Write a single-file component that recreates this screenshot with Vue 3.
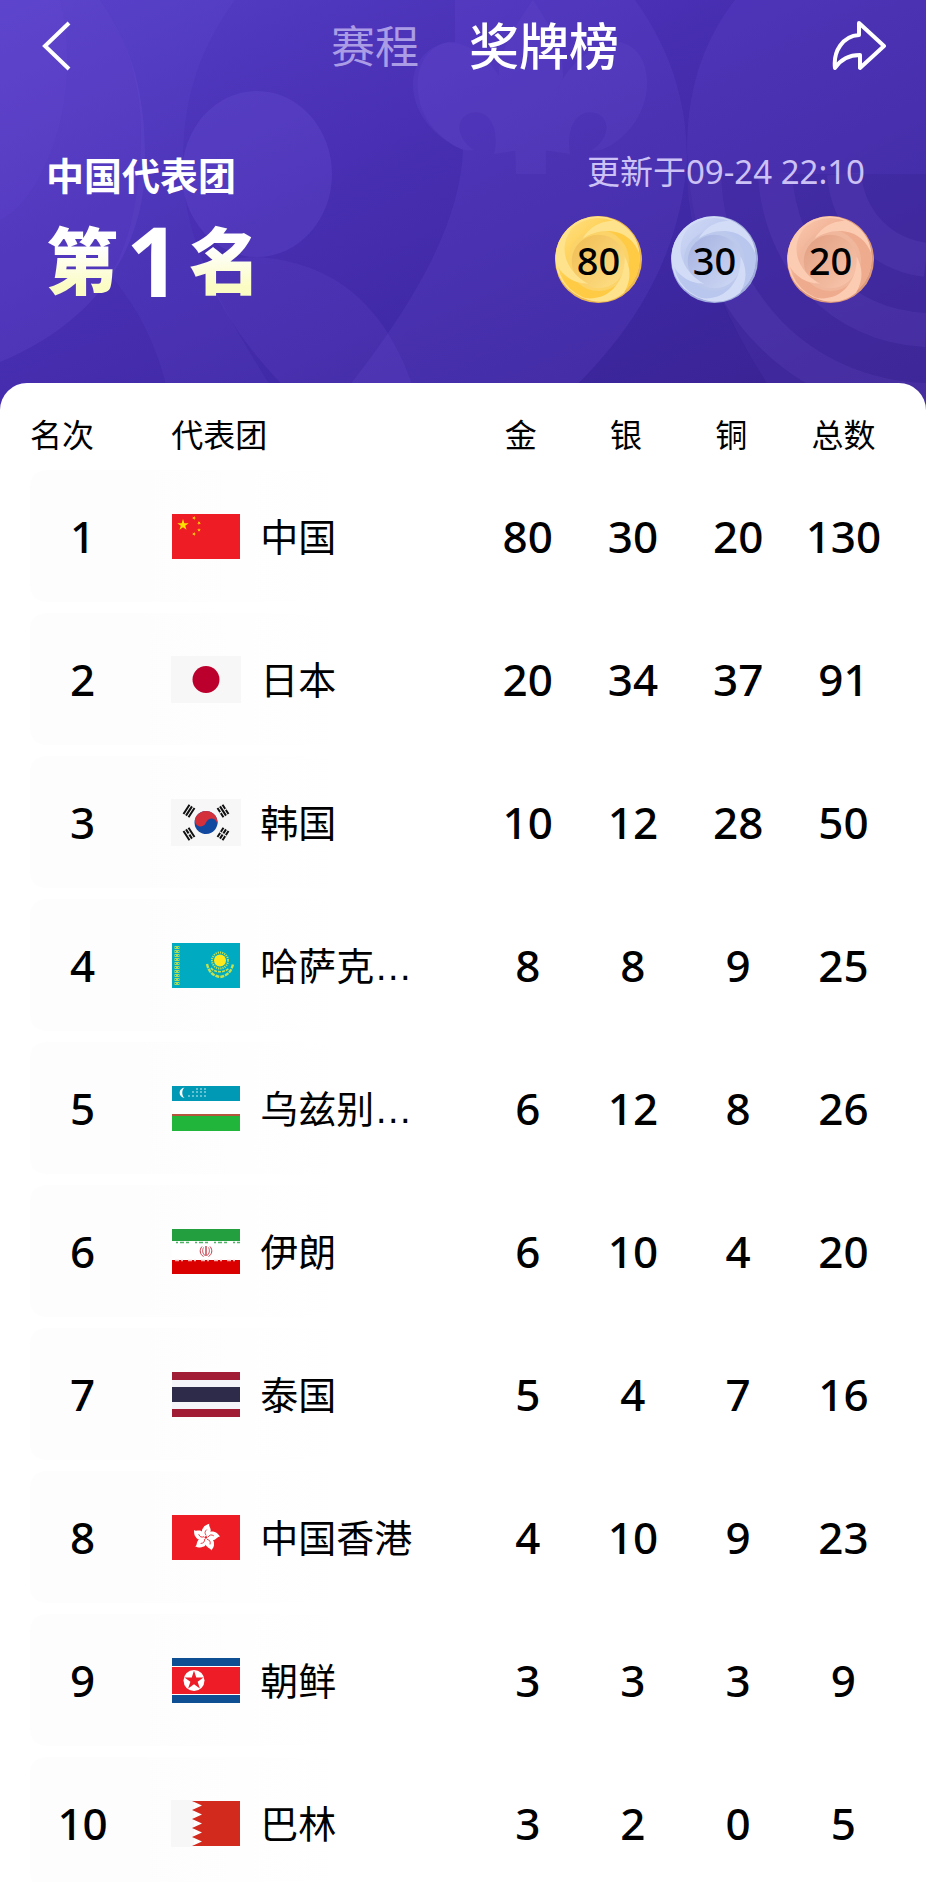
<script setup>
const medals = [
  { id: 'gold', label: '金牌', count: 80, light: '#ffe38c', mid: '#fbd368', deep: '#eeb850', rim: '#ffcb45' },
  { id: 'silver', label: '银牌', count: 30, light: '#d3dcf7', mid: '#bcc8ec', deep: '#a0addd', rim: '#b9c6ee' },
  { id: 'bronze', label: '铜牌', count: 20, light: '#fbcbb2', mid: '#f1b79c', deep: '#de997b', rim: '#eeab8d' },
]

const rows = [
  { rank: 1, code: 'cn', name: '中国', values: [80, 30, 20, 130] },
  { rank: 2, code: 'jp', name: '日本', values: [20, 34, 37, 91] },
  { rank: 3, code: 'kr', name: '韩国', values: [10, 12, 28, 50] },
  { rank: 4, code: 'kz', name: '哈萨克…', values: [8, 8, 9, 25] },
  { rank: 5, code: 'uz', name: '乌兹别…', values: [6, 12, 8, 26] },
  { rank: 6, code: 'ir', name: '伊朗', values: [6, 10, 4, 20] },
  { rank: 7, code: 'th', name: '泰国', values: [5, 4, 7, 16] },
  { rank: 8, code: 'hk', name: '中国香港', values: [4, 10, 9, 23] },
  { rank: 9, code: 'kp', name: '朝鲜', values: [3, 3, 3, 9] },
  { rank: 10, code: 'bh', name: '巴林', values: [3, 2, 0, 5] },
]

// Points of a five-pointed star, turned clockwise by `turn` degrees.
function star(cx, cy, r, turn = 0) {
  const points = []
  for (let i = 0; i < 10; i++) {
    const radius = i % 2 ? r * 0.382 : r
    const a = ((i * 36 - 90 + turn) * Math.PI) / 180
    points.push(`${(cx + radius * Math.cos(a)).toFixed(2)},${(cy + radius * Math.sin(a)).toFixed(2)}`)
  }
  return points.join(' ')
}

const trigrams = [
  { x: 17, y: 11, turn: -57, broken: [] },
  { x: 51, y: 11, turn: 57, broken: [-3, 3] },
  { x: 17, y: 34, turn: 57, broken: [0] },
  { x: 51, y: 34, turn: -57, broken: [-3, 0, 3] },
]

const uzStars = [
  [24, 3], [28, 3], [32, 3],
  [20, 6], [24, 6], [28, 6], [32, 6],
  [16, 10], [20, 10], [24, 10], [28, 10], [32, 10],
]
</script>

<template>
  <div class="page">
    <header class="hero">
      <svg class="pattern" viewBox="0 0 926 410" preserveAspectRatio="xMidYMin slice" aria-hidden="true">
        <g fill="#7a5ee0">
          <path opacity=".16" d="M100 0C135 50 146 100 145 165C144 255 90 325 0 362V0Z" />
          <path opacity=".08" d="M60 0C75 60 65 125 45 165C30 200 10 215 0 220V0Z" />
          <path opacity=".1" d="M235 0C195 55 183 105 183 165C183 250 230 320 285 410H172C160 350 140 310 110 275C140 230 148 130 135 80C130 50 115 20 100 0Z" />
          <ellipse opacity=".2" cx="257" cy="174" rx="75" ry="83" />
          <path opacity=".13" d="M257 257C330 262 390 300 420 410H310C262 370 225 320 205 270C220 260 240 257 257 257Z" />
          <path opacity=".14" d="M635 0C675 55 687 110 687 160C680 260 630 340 550 410H330C420 300 460 220 463 150C430 135 413 110 413 85C413 60 430 42 455 42V0Z" />
        </g>
        <g fill="#8164e4" opacity=".1">
          <path d="M533 0C560 40 570 70 558 100C548 120 545 135 546 174H516C516 135 512 118 504 100C490 70 505 40 533 0Z" />
          <path d="M543 150C546 90 575 45 620 42C655 50 655 105 626 133C612 147 600 152 592 150C608 140 613 120 596 113C575 108 566 130 570 154Z" />
          <path d="M519 150C516 90 490 45 448 42C411 50 408 105 438 133C452 147 464 152 474 150C458 140 453 120 470 113C490 108 500 130 494 154Z" />
        </g>
        <path fill="#6b4bd0" opacity=".2" d="M735 0C700 45 687 95 687 150C690 240 725 325 785 410H926V0Z" />
        <path fill="#34208a" opacity=".25" d="M687 174H926V410H785C725 325 690 240 687 174Z" />
        <g fill="none" stroke="#7758d6" stroke-width="34" opacity=".15">
          <path d="M704 174C708 300 800 396 926 400" />
          <path d="M775 174C780 260 840 326 926 330" />
          <path d="M844 174C848 220 880 254 926 260" />
        </g>
      </svg>

      <nav class="topbar">
        <button class="icon-button back" type="button" aria-label="返回">
          <svg width="32" height="50" viewBox="0 0 32 50" aria-hidden="true">
            <path d="M29 2L5 25L29 48" fill="none" stroke="#fff" stroke-width="4" />
          </svg>
        </button>
        <div class="tabs">
          <a class="tab" href="#schedule">赛程</a>
          <a class="tab active" href="#medals" aria-current="page">奖牌榜</a>
        </div>
        <button class="icon-button" type="button" aria-label="分享">
          <svg width="54" height="50" viewBox="0 0 54 50" aria-hidden="true">
            <path d="M3 47C1 30 11 15 27 14V2L52 25L28 47V34C17 34 9 38 3 47Z" fill="none" stroke="#fff" stroke-width="4" stroke-linejoin="round" />
          </svg>
        </button>
      </nav>

      <div class="summary">
        <section class="standing">
          <h2 class="team">中国代表团</h2>
          <p class="place"><span class="word">第</span><span class="number">1</span><span class="word">名</span></p>
        </section>
        <section class="totals">
          <p class="updated">更新于09-24 22:10</p>
          <ul class="medals">
            <li v-for="m in medals" :key="m.id" class="medal" :aria-label="m.label">
              <svg class="medal-art" viewBox="0 0 260 260" aria-hidden="true">
                <defs>
                  <linearGradient :id="m.id + '-base'" x1="0" y1="0" x2="1" y2="1">
                    <stop offset="0" :stop-color="m.light" />
                    <stop offset=".45" :stop-color="m.rim" />
                    <stop offset="1" :stop-color="m.rim" />
                  </linearGradient>
                  <linearGradient :id="m.id + '-inner'" x1="0" y1="0" x2="1" y2="1">
                    <stop offset="0" :stop-color="m.deep" />
                    <stop offset="1" :stop-color="m.light" />
                  </linearGradient>
                </defs>
                <circle cx="130" cy="130" r="130" :fill="m.deep" />
                <circle cx="127" cy="127" r="126" :fill="m.light" />
                <circle cx="130" cy="129" r="123" :fill="`url(#${m.id}-base)`" />
                <circle cx="130" cy="133" r="91" :fill="m.mid" />
                <circle cx="130" cy="136" r="80" :fill="`url(#${m.id}-inner)`" opacity=".85" />
                <g :fill="m.light">
                  <path v-for="turn in [0, 120, 240]" :key="turn" :transform="`rotate(${turn} 130 130)`" d="M83 67C98 42 125 14 178 14C222 30 249 68 252 112C238 76 212 52 174 46C138 41 106 52 83 67Z" />
                </g>
              </svg>
              <span class="medal-count">{{ m.count }}</span>
            </li>
          </ul>
        </section>
      </div>
    </header>

    <main class="card">
      <table class="ranking">
        <colgroup>
          <col class="col-narrow" /><col /><col class="col-narrow" /><col class="col-narrow" /><col class="col-narrow" /><col class="col-narrow" />
        </colgroup>
        <thead>
          <tr>
            <th class="head-rank" scope="col">名次</th>
            <th class="head-team" scope="col">代表团</th>
            <th class="head-medal" scope="col">金</th>
            <th class="head-medal" scope="col">银</th>
            <th class="head-medal" scope="col">铜</th>
            <th scope="col">总数</th>
          </tr>
        </thead>
        <tbody>
          <tr v-for="row in rows" :key="row.code">
            <td class="rank">{{ row.rank }}</td>
            <td class="team-cell">
              <div class="team-line">
                <svg class="flag" :class="row.code" viewBox="0 0 68 45" aria-hidden="true">
                  <g v-if="row.code === 'cn'">
                    <rect width="68" height="45" fill="#ee1c25" />
                    <g fill="#ffe100">
                      <polygon :points="star(11, 11, 6)" />
                      <polygon :points="star(22, 4, 2, 20)" />
                      <polygon :points="star(27, 9, 2, 40)" />
                      <polygon :points="star(27, 16, 2)" />
                      <polygon :points="star(22, 20, 2, 20)" />
                    </g>
                  </g>
                  <g v-else-if="row.code === 'jp'">
                    <rect width="68" height="45" fill="#f7f7f7" />
                    <circle cx="34" cy="22.5" r="13.5" fill="#bc002d" />
                  </g>
                  <g v-else-if="row.code === 'kr'">
                    <rect width="68" height="45" fill="#f7f7f7" />
                    <g transform="rotate(18 34 22.5)">
                      <circle cx="34" cy="22.5" r="11.5" fill="#1249a0" />
                      <path d="M22.5 22.5A11.5 11.5 0 0 1 45.5 22.5A5.75 5.75 0 0 0 34 22.5A5.75 5.75 0 0 1 22.5 22.5Z" fill="#d3303c" />
                    </g>
                    <g v-for="t in trigrams" :key="t.x + '-' + t.y" :transform="`translate(${t.x} ${t.y}) rotate(${t.turn})`">
                      <path d="M-5.5 -3H5.5M-5.5 0H5.5M-5.5 3H5.5" stroke="#111" stroke-width="2" />
                      <path v-for="b in t.broken" :key="b" :d="`M-.7 ${b}H.7`" stroke="#f7f7f7" stroke-width="2.2" />
                    </g>
                  </g>
                  <g v-else-if="row.code === 'kz'">
                    <rect width="68" height="45" fill="#00abc2" />
                    <path d="M5 3V42" stroke="#a8dc5a" stroke-width="5" stroke-dasharray="3 1" />
                    <path d="M3.5 4V42M6.5 4V42" stroke="#00abc2" stroke-width="1" stroke-dasharray="1 3" />
                    <circle cx="48" cy="17.5" r="8" fill="none" stroke="#c7e14c" stroke-width="2" stroke-dasharray="1.2 1" />
                    <circle cx="48" cy="17.5" r="6" fill="#ffe81c" />
                    <path d="M35 21C37 30 42 33 48 34C54 33 59 30 61 21" fill="none" stroke="#c7e14c" stroke-width="2.4" stroke-dasharray="4 1" />
                    <path d="M39 25C43 30 53 30 57 25" fill="none" stroke="#c7e14c" stroke-width="1.6" stroke-dasharray="3 1" />
                  </g>
                  <g v-else-if="row.code === 'uz'">
                    <rect width="68" height="45" fill="#fff" />
                    <rect width="68" height="15" fill="#0099b5" />
                    <rect y="28" width="68" height="2" fill="#b5553c" />
                    <rect y="30" width="68" height="15" fill="#22b53c" />
                    <path d="M12.5 1.5C6 2.500 6 11 12.500 12C9.500 9.500 9.500 4 12.500 1.500Z" fill="#fff" />
                    <circle v-for="s in uzStars" :key="s.join('-')" :cx="s[0] + 1" :cy="s[1]" r=".8" fill="#e6f6fa" />
                  </g>
                  <g v-else-if="row.code === 'ir'">
                    <rect width="68" height="45" fill="#fff" />
                    <rect width="68" height="12" fill="#239f40" />
                    <rect y="31" width="68" height="14" fill="#da0000" />
                    <path d="M4 13.5H68" stroke="#4fb267" stroke-width="1.5" stroke-dasharray="2 2 4 2 3 6" />
                    <path d="M3 31.5H68" stroke="#f6b6b6" stroke-width="1.5" stroke-dasharray="4 2 2 5" />
                    <g fill="none" stroke="#c23a48">
                      <path d="M34 17V27" stroke-width="1.4" />
                      <path d="M31.5 18.5C30 21 30.5 25 33 26.500M36.500 18.500C38 21 37.500 25 35 26.500" stroke-width=".9" />
                      <path d="M30 17.500C27 21 28 25.500 31.500 27.500M38 17.500C41 21 40 25.500 36.500 27.500" stroke-width="1" />
                    </g>
                  </g>
                  <g v-else-if="row.code === 'th'">
                    <rect width="68" height="45" fill="#a01d35" />
                    <rect y="8" width="68" height="29" fill="#f5f4f9" />
                    <rect y="15" width="68" height="15" fill="#2d2a4a" />
                  </g>
                  <g v-else-if="row.code === 'hk'">
                    <rect width="68" height="45" fill="#ee1c25" />
                    <g v-for="i in 5" :key="i" :transform="`translate(34 22.5) rotate(${i * 72 - 66})`">
                      <path d="M0 -1C-4 -2 -6 -6 -4 -9C-3 -12 0 -13 2 -14C1 -12 4 -10 4 -7C4 -4 2 -2 0 -1Z" fill="#fff" />
                      <path d="M0 -2C-2 -4 -2 -6 0 -8" fill="none" stroke="#ee1c25" stroke-width=".8" />
                    </g>
                  </g>
                  <g v-else-if="row.code === 'kp'">
                    <rect width="68" height="45" fill="#0e4f93" />
                    <rect y="8" width="68" height="29" fill="#fff" />
                    <rect y="9" width="68" height="27" fill="#ed1c27" />
                    <circle cx="22" cy="22.5" r="10.5" fill="#fff" />
                    <polygon :points="star(22, 22.5, 10)" fill="#ed1c27" />
                  </g>
                  <g v-else>
                    <rect x="-1" y="-1" width="23" height="47" fill="#f7f7f7" />
                    <path d="M20 0H68V45H20L30 40.5L20 36L30 31.5L20 27L30 22.5L20 18L30 13.5L20 9L30 4.5Z" fill="#d32a1e" />
                  </g>
                </svg>
                <span class="name">{{ row.name }}</span>
              </div>
            </td>
            <td v-for="(value, i) in row.values" :key="i">{{ value }}</td>
          </tr>
        </tbody>
      </table>
    </main>
  </div>
</template>

<style>
body {
  background: #fff;
}
</style>

<style scoped>
.page {
  height: 100vh;
  overflow: hidden;
  display: flex;
  flex-direction: column;
  color: #000;
  font-family: "Noto Sans", "Noto Sans CJK SC", sans-serif;
}
h2, p, ul {
  margin: 0;
  padding: 0;
}
.hero {
  position: relative;
  flex: none;
  box-sizing: border-box;
  padding-bottom: 90px;
  background: linear-gradient(155deg, #563fc7 0%, #482fb3 38%, #3d27a0 72%, #38218c 100%);
  color: #fff;
}
.pattern {
  position: absolute;
  inset: 0;
  width: 100%;
  height: 100%;
}
.topbar {
  position: relative;
  display: flex;
  align-items: center;
  justify-content: space-between;
  height: 92px;
  padding: 0 40px;
}
.icon-button {
  display: flex;
  width: 54px;
  padding: 0;
  border: 0;
  background: none;
  cursor: pointer;
}
.tabs {
  display: flex;
  align-items: center;
  gap: 50px;
  padding-left: 24px;
}
.tab {
  color: #ab9ce6;
  font-size: 44px;
  line-height: 60px;
  text-decoration: none;
}
.tab.active {
  color: #fff;
  font-size: 50px;
  font-weight: 500;
}
.summary {
  position: relative;
  display: flex;
  justify-content: space-between;
  padding: 58px 52px 0 46px;
}
.team {
  font-size: 38px;
  font-weight: 700;
  line-height: 50px;
}
.place {
  display: flex;
  align-items: center;
  gap: 8px;
  height: 120px;
  font-size: 72px;
  font-weight: 900;
  line-height: 120px;
}
.word {
  background: linear-gradient(#fff 40%, #fbfcc4 72%);
  background-clip: text;
  color: transparent;
}
.number {
  font-size: 96px;
  font-weight: 700;
}
.totals {
  display: flex;
  flex-direction: column;
  align-items: flex-end;
}
.updated {
  padding-right: 9px;
  color: #cdc2f5;
  font-size: 33px;
  line-height: 44px;
}
.medals {
  display: flex;
  gap: 29px;
  margin-top: 22px;
  list-style: none;
}
.medal {
  display: grid;
  place-items: center;
  width: 87px;
  height: 87px;
  color: #000;
}
.medal-art,
.medal-count {
  grid-area: 1 / 1;
}
.medal-art {
  width: 87px;
  height: 87px;
}
.medal-count {
  z-index: 1;
  font-size: 38px;
  font-weight: 500;
  line-height: 44px;
}
.card {
  position: relative;
  flex: 1;
  min-height: 0;
  margin-top: -27px;
  overflow-y: auto;
  scrollbar-width: none;
  padding: 0 30px;
  border-radius: 27px 27px 0 0;
  background: #fff;
}
.ranking {
  width: 100%;
  table-layout: fixed;
  border-collapse: separate;
  border-spacing: 0 11px;
}
.col-narrow {
  width: 12.15%;
}
th {
  height: 49px;
  padding: 16px 0 0;
  font-size: 32px;
  font-weight: 400;
  line-height: 48px;
  text-align: center;
}
.head-rank {
  text-align: left;
}
.head-team {
  padding-left: 36px;
  text-align: left;
}
.head-medal {
  padding-right: 14px;
}
td {
  height: 132px;
  padding: 0;
  font-size: 44px;
  font-weight: 500;
  line-height: 60px;
  text-align: center;
}
.rank {
  border-radius: 16px 0 0 16px;
  background: #fdfdfd;
}
.team-cell {
  padding-left: 37px;
  background: linear-gradient(90deg, #fdfdfd, #fff 62%);
}
.team-line {
  display: flex;
  align-items: center;
  gap: 20px;
}
.flag {
  flex: none;
  width: 68px;
  height: 45px;
  overflow: visible;
}
.jp,
.kr {
  outline: 1px solid #f7f7f7;
}
.name {
  padding-top: 4px;
  font-family: "Liberation Sans", "Noto Sans CJK SC", sans-serif;
  font-size: 38px;
  font-weight: 400;
  white-space: nowrap;
}
</style>
